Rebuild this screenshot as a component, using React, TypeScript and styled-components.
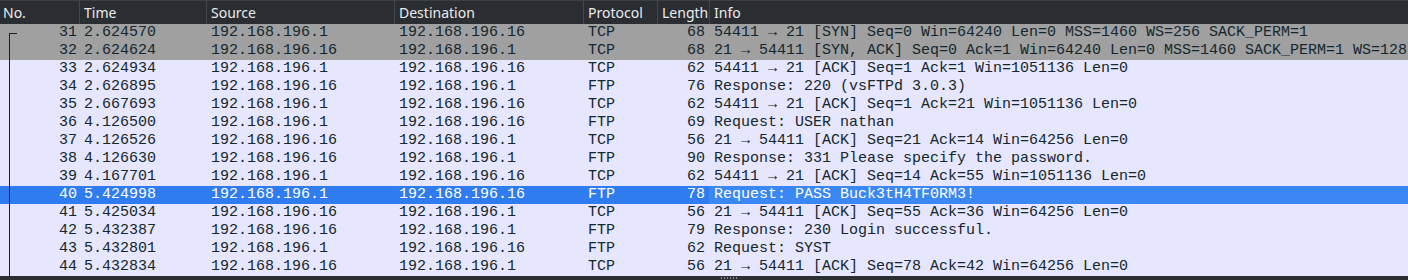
import styled, { createGlobalStyle } from "styled-components";

type Packet = {
  no: number;
  time: string;
  src: string;
  dst: string;
  proto: string;
  len: number;
  info: string;
  kind: "syn" | "tcp";
};

const packets: Packet[] = [
  { no: 31, time: "2.624570", src: "192.168.196.1", dst: "192.168.196.16", proto: "TCP", len: 68, info: "54411 → 21 [SYN] Seq=0 Win=64240 Len=0 MSS=1460 WS=256 SACK_PERM=1", kind: "syn" },
  { no: 32, time: "2.624624", src: "192.168.196.16", dst: "192.168.196.1", proto: "TCP", len: 68, info: "21 → 54411 [SYN, ACK] Seq=0 Ack=1 Win=64240 Len=0 MSS=1460 SACK_PERM=1 WS=128", kind: "syn" },
  { no: 33, time: "2.624934", src: "192.168.196.1", dst: "192.168.196.16", proto: "TCP", len: 62, info: "54411 → 21 [ACK] Seq=1 Ack=1 Win=1051136 Len=0", kind: "tcp" },
  { no: 34, time: "2.626895", src: "192.168.196.16", dst: "192.168.196.1", proto: "FTP", len: 76, info: "Response: 220 (vsFTPd 3.0.3)", kind: "tcp" },
  { no: 35, time: "2.667693", src: "192.168.196.1", dst: "192.168.196.16", proto: "TCP", len: 62, info: "54411 → 21 [ACK] Seq=1 Ack=21 Win=1051136 Len=0", kind: "tcp" },
  { no: 36, time: "4.126500", src: "192.168.196.1", dst: "192.168.196.16", proto: "FTP", len: 69, info: "Request: USER nathan", kind: "tcp" },
  { no: 37, time: "4.126526", src: "192.168.196.16", dst: "192.168.196.1", proto: "TCP", len: 56, info: "21 → 54411 [ACK] Seq=21 Ack=14 Win=64256 Len=0", kind: "tcp" },
  { no: 38, time: "4.126630", src: "192.168.196.16", dst: "192.168.196.1", proto: "FTP", len: 90, info: "Response: 331 Please specify the password.", kind: "tcp" },
  { no: 39, time: "4.167701", src: "192.168.196.1", dst: "192.168.196.16", proto: "TCP", len: 62, info: "54411 → 21 [ACK] Seq=14 Ack=55 Win=1051136 Len=0", kind: "tcp" },
  { no: 40, time: "5.424998", src: "192.168.196.1", dst: "192.168.196.16", proto: "FTP", len: 78, info: "Request: PASS Buck3tH4TF0RM3!", kind: "tcp" },
  { no: 41, time: "5.425034", src: "192.168.196.16", dst: "192.168.196.1", proto: "TCP", len: 56, info: "21 → 54411 [ACK] Seq=55 Ack=36 Win=64256 Len=0", kind: "tcp" },
  { no: 42, time: "5.432387", src: "192.168.196.16", dst: "192.168.196.1", proto: "FTP", len: 79, info: "Response: 230 Login successful.", kind: "tcp" },
  { no: 43, time: "5.432801", src: "192.168.196.1", dst: "192.168.196.16", proto: "FTP", len: 62, info: "Request: SYST", kind: "tcp" },
  { no: 44, time: "5.432834", src: "192.168.196.16", dst: "192.168.196.1", proto: "TCP", len: 56, info: "21 → 54411 [ACK] Seq=78 Ack=42 Win=64256 Len=0", kind: "tcp" },
];

const SELECTED = 40;

const GlobalStyle = createGlobalStyle`
  html, body {
    margin: 0;
    padding: 0;
    background: #2b2e33;
    overflow: hidden;
  }
`;

const COLS = "79px 127px 188px 189px 74px 52px 1fr";

const List = styled.div`
  width: 1408px;
  height: 280px;
  display: flex;
  flex-direction: column;
  background: #2b2e33;
  overflow: hidden;
`;

const Header = styled.div`
  display: grid;
  grid-template-columns: ${COLS};
  height: 23px;
  border-top: 1px solid #3c3f45;
  background: #2a2d32;
`;

const HeadCell = styled.div<{ $first?: boolean }>`
  display: flex;
  align-items: center;
  padding: 0 4px;
  border-left: 1px solid ${(p) => (p.$first ? "transparent" : "#44474d")};
  font-family: "Noto Sans", "Open Sans", sans-serif;
  font-size: 14px;
  color: #ececec;
  white-space: nowrap;
  overflow: hidden;
  ${(p) => (p.$first ? "padding-left: 3px; border-left: none;" : "")}
`;

const Row = styled.div<{ $bg: string; $fg: string }>`
  display: grid;
  grid-template-columns: ${COLS};
  height: 18px;
  background: ${(p) => p.$bg};
  color: ${(p) => p.$fg};
  font-family: "Liberation Mono", "DejaVu Sans Mono", monospace;
  font-size: 15px;
  line-height: 18px;
`;

const Cell = styled.div<{ $right?: boolean; $bg?: string }>`
  padding: 0 4px 0 4px;
  border-left: 1px solid transparent;
  white-space: nowrap;
  overflow: hidden;
  text-align: ${(p) => (p.$right ? "right" : "left")};
  ${(p) => (p.$bg ? `background: ${p.$bg};` : "")}
`;

const NoCell = styled.div<{ $mark: "start" | "line" }>`
  position: relative;
  padding-right: 2px;
  text-align: right;
  white-space: nowrap;

  &::before {
    content: "";
    position: absolute;
    left: 9px;
    width: 1px;
    background: #1b1f22;
    top: ${(p) => (p.$mark === "start" ? "9px" : "0")};
    bottom: 0;
  }

  &::after {
    content: "";
    position: absolute;
    left: 9px;
    top: 9px;
    height: 1px;
    width: ${(p) => (p.$mark === "start" ? "8px" : "0")};
    background: #1b1f22;
  }
`;

const Splitter = styled.div`
  flex: 1;
  display: flex;
  justify-content: center;
  align-items: flex-end;
  padding-left: 50px;
`;

const Grip = styled.div`
  width: 16px;
  height: 2px;
  margin-bottom: 1px;
  background: repeating-linear-gradient(90deg, #8a8d92 0 1px, transparent 1px 3px);
`;

function colours(p: Packet) {
  if (p.no === SELECTED) return { bg: "#2f7cf0", fg: "#ffffff" };
  if (p.kind === "syn") return { bg: "#a0a0a0", fg: "#12272e" };
  return { bg: "#e7e6ff", fg: "#12272e" };
}

export default function App() {
  return (
    <>
      <GlobalStyle />
      <List>
        <Header>
          <HeadCell $first>No.</HeadCell>
          <HeadCell>Time</HeadCell>
          <HeadCell>Source</HeadCell>
          <HeadCell>Destination</HeadCell>
          <HeadCell>Protocol</HeadCell>
          <HeadCell>Length</HeadCell>
          <HeadCell>Info</HeadCell>
        </Header>
        {packets.map((p, i) => {
          const c = colours(p);
          return (
            <Row key={p.no} $bg={c.bg} $fg={c.fg}>
              <NoCell $mark={i === 0 ? "start" : "line"}>{p.no}</NoCell>
              <Cell>{p.time}</Cell>
              <Cell>{p.src}</Cell>
              <Cell>{p.dst}</Cell>
              <Cell>{p.proto}</Cell>
              <Cell $right>{p.len}</Cell>
              <Cell $bg={p.no === SELECTED ? "#3b87f3" : undefined}>{p.info}</Cell>
            </Row>
          );
        })}
        <Splitter>
          <Grip />
        </Splitter>
      </List>
    </>
  );
}
